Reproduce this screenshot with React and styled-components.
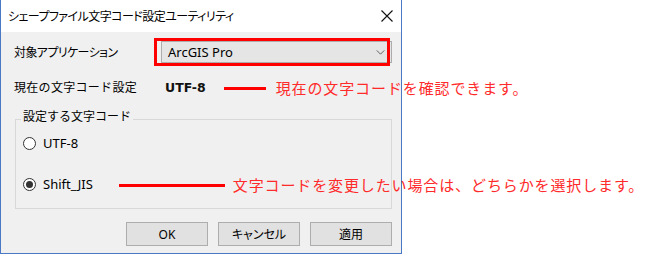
import React from "react";
import styled, { createGlobalStyle } from "styled-components";

const GlobalStyle = createGlobalStyle`
  html, body {
    margin: 0;
    padding: 0;
    background: #ffffff;
  }
  body {
    font-family: "Noto Sans", "Noto Sans CJK JP", sans-serif;
  }
`;

export default function App() {
  return (
    <>
      <GlobalStyle />
      <Page>
        <Window>
          <TitleBar>
            <Title>シェープファイル文字コード設定ユーティリティ</Title>
            <CloseIcon viewBox="0 0 12 12">
              <path d="M0.5 0.5 L11.5 11.5 M11.5 0.5 L0.5 11.5" />
            </CloseIcon>
          </TitleBar>

          <Body>
            <FieldRow>
              <Label $narrow>対象アプリケーション</Label>
              <Combo>
                <ComboText>ArcGIS Pro</ComboText>
                <Chevron viewBox="0 0 10 6">
                  <path d="M0.5 0.5 L5 5 L9.5 0.5" />
                </Chevron>
                <Highlight />
              </Combo>
            </FieldRow>

            <FieldRow $gap={13}>
              <Label>現在の文字コード設定</Label>
              <ValueCell>
                <Value>UTF-8</Value>
                <Annotation $offset={18} $lineWidth={42} $gap={10}>
                  <NoteLine />
                  <Note>現在の文字コードを確認できます。</Note>
                </Annotation>
              </ValueCell>
            </FieldRow>

            <GroupBox>
              <Legend>設定する文字コード</Legend>
              <RadioRow>
                <Radio />
                <RadioLabel>UTF-8</RadioLabel>
              </RadioRow>
              <RadioRow $gap={19}>
                <Radio $checked />
                <RadioLabel>Shift_JIS</RadioLabel>
                <Annotation $offset={26} $lineWidth={106} $gap={8}>
                  <NoteLine />
                  <Note>文字コードを変更したい場合は、どちらかを選択します。</Note>
                </Annotation>
              </RadioRow>
            </GroupBox>

            <ButtonBar>
              <Button>OK</Button>
              <Button>キャンセル</Button>
              <Button>適用</Button>
            </ButtonBar>
          </Body>
        </Window>
      </Page>
    </>
  );
}

const Page = styled.div`
  width: 659px;
  height: 255px;
  background: #ffffff;
  overflow: hidden;
`;

const Window = styled.div`
  width: 402px;
  height: 254px;
  box-sizing: border-box;
  border: 1px solid #4a78c4;
  border-top: none;
  background: #f0f0f0;
  display: flex;
  flex-direction: column;
  overflow: visible;
`;

const TitleBar = styled.div`
  height: 32px;
  flex: none;
  background: #ffffff;
  display: flex;
  align-items: center;
  justify-content: space-between;
  padding: 0 8px 0 7px;
`;

const Title = styled.span`
  font-size: 12px;
  color: #000000;
  font-feature-settings: "palt";
  letter-spacing: -0.55px;
`;

const CloseIcon = styled.svg`
  width: 12px;
  height: 12px;
  path {
    stroke: #111111;
    stroke-width: 1.1;
    fill: none;
  }
`;

const Body = styled.div`
  flex: 1;
  display: flex;
  flex-direction: column;
  padding: 9px 9px 0 13px;
`;

const FieldRow = styled.div`
  display: grid;
  grid-template-columns: 147px 1fr;
  align-items: center;
  height: 22px;
  margin-top: ${(p) => p.$gap || 0}px;
`;

const Label = styled.span`
  font-size: 12px;
  color: #000000;
  white-space: nowrap;
  font-feature-settings: ${(p) => (p.$narrow ? '"palt"' : "normal")};
  letter-spacing: ${(p) => (p.$narrow ? "-0.6px" : "0.3px")};
`;

const Combo = styled.div`
  position: relative;
  height: 22px;
  box-sizing: border-box;
  border: 1px solid #adadad;
  background: #e5e5e5;
  display: flex;
  align-items: center;
  justify-content: space-between;
  padding: 0 6px 0 6px;
`;

const ComboText = styled.span`
  font-size: 13px;
  color: #000000;
`;

const Chevron = styled.svg`
  width: 9px;
  height: 5px;
  path {
    stroke: #555555;
    stroke-width: 1.1;
    fill: none;
  }
`;

const Highlight = styled.div`
  position: absolute;
  left: -8px;
  right: 1px;
  top: -4px;
  bottom: -4px;
  border: 3px solid #ff0000;
  pointer-events: none;
`;

const ValueCell = styled.div`
  display: flex;
  align-items: center;
  padding-left: 4px;
  white-space: nowrap;
`;

const Value = styled.span`
  font-family: "DejaVu Sans", sans-serif;
  font-weight: bold;
  font-size: 12.5px;
  color: #111111;
`;

const Annotation = styled.div`
  display: flex;
  align-items: center;
  gap: ${(p) => p.$gap}px;
  margin-left: ${(p) => p.$offset}px;
  white-space: nowrap;

  > span:first-child {
    width: ${(p) => p.$lineWidth}px;
  }
`;

const NoteLine = styled.span`
  display: block;
  height: 3px;
  background: #ff0000;
  margin-top: 2px;
`;

const Note = styled.span`
  font-family: "Noto Sans CJK JP", sans-serif;
  font-size: 15px;
  letter-spacing: 0.88px;
  color: #ff2a2a;
  line-height: 20px;
  margin-top: 2px;
`;

const GroupBox = styled.fieldset`
  margin: 9px 0 0 1px;
  padding: 1px 7px 13px 7px;
  border: 1px solid #d8d8d8;
  min-width: 0;
`;

const Legend = styled.legend`
  font-size: 12px;
  color: #000000;
  padding: 2px 2px 6px;
  margin-left: -2px;
  line-height: 16px;
`;

const RadioRow = styled.div`
  display: flex;
  align-items: center;
  height: 22px;
  margin-top: ${(p) => p.$gap || 0}px;
`;

const Radio = styled.span`
  width: 13px;
  height: 13px;
  box-sizing: border-box;
  border-radius: 50%;
  border: 1px solid #333333;
  background: #ffffff;
  display: flex;
  align-items: center;
  justify-content: center;
  flex: none;

  &::after {
    content: "";
    width: 7px;
    height: 7px;
    border-radius: 50%;
    background: ${(p) => (p.$checked ? "#333333" : "transparent")};
  }
`;

const RadioLabel = styled.span`
  font-size: 13px;
  color: #000000;
  margin-left: 7px;
`;

const ButtonBar = styled.div`
  display: flex;
  justify-content: flex-end;
  gap: 10px;
  margin-top: 13px;
`;

const Button = styled.button`
  width: 82px;
  height: 24px;
  box-sizing: border-box;
  border: 1px solid #adadad;
  background: #e1e1e1;
  font-family: "Noto Sans", "Noto Sans CJK JP", sans-serif;
  font-size: 12px;
  color: #000000;
  padding: 0;
  font-feature-settings: "palt";
`;
